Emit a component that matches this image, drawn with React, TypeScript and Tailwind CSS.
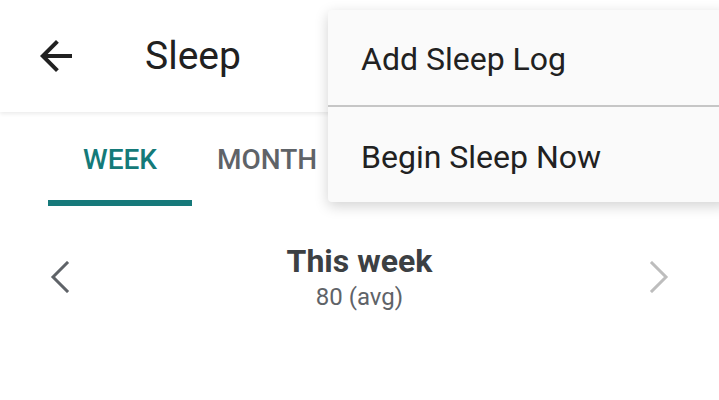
import React from 'react';

const ArrowBack = () => (
  <svg viewBox="0 0 24 24" className="h-12 w-12" fill="#212121">
    <path d="M20 11H7.83l5.59-5.59L12 4l-8 8 8 8 1.41-1.41L7.83 13H20v-2z" />
  </svg>
);

const Chevron = ({ dir, color }: { dir: 'left' | 'right'; color: string }) => (
  <svg viewBox="0 0 20 32" className="h-8 w-5" fill="none" stroke={color} strokeWidth="3" strokeLinecap="square">
    {dir === 'left' ? <path d="M17 2 L3 16 L17 30" /> : <path d="M3 2 L17 16 L3 30" />}
  </svg>
);

const App = () => {
  return (
    <div className="relative h-[400px] w-[719px] overflow-hidden bg-white font-['Roboto',sans-serif]">
      <div className="relative z-10 flex h-[112px] items-center bg-white pl-8 shadow-[0_2px_4px_rgba(0,0,0,0.08)]">
        <ArrowBack />
        <h1 className="ml-[65px] text-[39px] leading-none text-[#212121]">Sleep</h1>
      </div>

      <div className="flex h-[94px] items-end pl-12">
        <div className="flex h-full w-[144px] flex-col items-center justify-end">
          <span className="mb-[26px] text-[28px] font-medium leading-none text-[#147a79]">WEEK</span>
          <div className="h-[6px] w-full bg-[#16797a]" />
        </div>
        <div className="flex h-full w-[150px] flex-col items-center justify-end">
          <span className="mb-[32px] text-[28px] font-medium leading-none text-[#5f6368]">MONTH</span>
        </div>
      </div>

      <div className="flex items-center justify-between px-[50px] pt-[36px]">
        <Chevron dir="left" color="#5f6368" />
        <div className="flex flex-col items-center">
          <span className="text-[32px] font-bold leading-[38px] text-[#3c4043]">This week</span>
          <span className="mt-[3px] text-[24px] leading-[28px] text-[#5f6368]">80 (avg)</span>
        </div>
        <Chevron dir="right" color="#bdbdbd" />
      </div>

      <div className="absolute left-[328px] top-[10px] z-20 w-[400px] rounded bg-[#fafafa] shadow-[0_4px_14px_rgba(0,0,0,0.18)]">
        <div className="flex h-[95px] items-center pl-[33px] pt-[2px] text-[32px] text-[#212121]">Add Sleep Log</div>
        <div className="h-[2px] bg-[#c6c6c6]" />
        <div className="flex h-[95px] items-center pl-[33px] pt-[4px] text-[32px] text-[#212121]">Begin Sleep Now</div>
      </div>
    </div>
  );
};

export default App;
